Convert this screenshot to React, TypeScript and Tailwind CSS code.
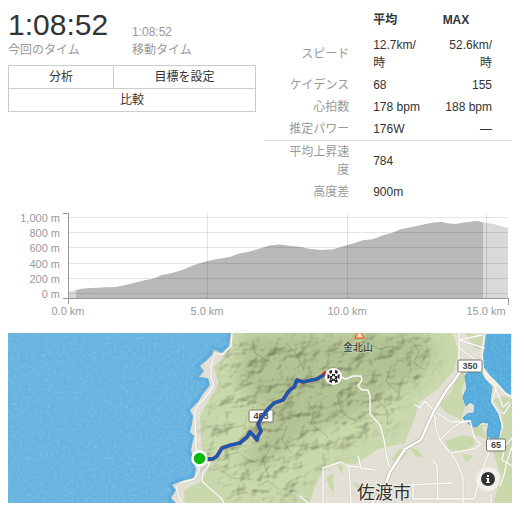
import React from "react";

const sans = "font-['Liberation_Sans','Noto_Sans_CJK_JP',sans-serif]";

type Stat = { label: string; average: string; max?: string };

const effortStats: Stat[] = [
  { label: "スピード", average: "12.7km/時", max: "52.6km/時" },
  { label: "ケイデンス", average: "68", max: "155" },
  { label: "心拍数", average: "178 bpm", max: "188 bpm" },
  { label: "推定パワー", average: "176W", max: "—" },
];

const climbStats: Stat[] = [
  { label: "平均上昇速度", average: "784" },
  { label: "高度差", average: "900m" },
];

function StatRow({ label, average, max }: Stat) {
  return (
    <tr>
      <th scope="row" className="py-0.5 pr-3.5 pl-5 text-right font-normal text-[#999]">
        {label}
      </th>
      <td className="py-0.5 pr-2 pl-2.5">{average}</td>
      <td className="py-0.5 pr-5 pl-2.5 text-right">{max}</td>
    </tr>
  );
}

function Summary() {
  const button = "h-6 cursor-pointer border border-[#ccc] bg-white text-xs leading-4 text-[#333]";
  return (
    <section>
      <dl className="grid grid-cols-2 items-end">
        <div className="flex flex-col-reverse">
          <dt className="text-xs leading-4 text-[#999]">今回のタイム</dt>
          <dd className="text-[30px] leading-[34px] text-[#333]">1:08:52</dd>
        </div>
        <div className="flex flex-col-reverse">
          <dt className="text-xs leading-4 text-[#999]">移動タイム</dt>
          <dd className="text-xs leading-5 text-[#999]">1:08:52</dd>
        </div>
      </dl>
      <div className="mt-[7px] flex">
        <button className={`${button} w-[106px]`}>分析</button>
        <button className={`${button} -ml-px flex-1`}>目標を設定</button>
      </div>
      <button className={`${button} -mt-px block w-full`}>比較</button>
    </section>
  );
}

function Stats() {
  return (
    <table className="w-full table-fixed border-collapse text-xs leading-[18px] text-[#333]">
      <colgroup>
        <col className="w-[40%]" />
        <col className="w-[28%]" />
        <col className="w-[32%]" />
      </colgroup>
      <thead>
        <tr className="h-[26px] text-left font-bold">
          <td />
          <th scope="col" className="pb-0.5 pl-2.5">平均</th>
          <th scope="col" className="pb-0.5 pl-2.5">MAX</th>
        </tr>
      </thead>
      <tbody>
        {effortStats.map((s) => (
          <StatRow key={s.label} {...s} />
        ))}
      </tbody>
      <tbody className="border-t border-[#ddd]">
        {climbStats.map((s) => (
          <StatRow key={s.label} {...s} />
        ))}
      </tbody>
    </table>
  );
}

const profile =
  "M68 298V292L73 291L80 289L92 288L104 287.500L116 287L124 285.500L134 283L144 280.500L154 278.500L162 275L168 274L176 272L184 269.500L192 266L202 262.500L208 261L218 259L230 257L238 254L250 251.500L262 248L270 245.500L280 244.500L290 246L300 247L310 249L320 250L333 249.500L346 245.500L355 243L364 240L372 239.500L384 235L392 233L400 229.500L412 227L424 224.500L434 222.500L442 222L448 223.500L456 224L464 222.500L478 221L483 222.500L492 223.500L500 226L508 228V298Z";

const elevations: [string, number][] = [
  ["1,000 m", 217],
  ["800 m", 232],
  ["600 m", 247],
  ["400 m", 263],
  ["200 m", 278],
  ["0 m", 293],
];

const distances: [string, number][] = [
  ["0.0 km", 68],
  ["5.0 km", 207],
  ["10.0 km", 347],
  ["15.0 km", 486],
];

function ElevationChart() {
  return (
    <svg viewBox="8 208 504 115" role="img" aria-label="標高" className="mt-[5px] block w-full text-[11px]">
      <defs>
        <clipPath id="segment">
          <rect x="76" y="208" width="407" height="90" />
        </clipPath>
      </defs>
      <path d={profile} fill="#d9d9d9" />
      <path d={profile} fill="#b9b9b9" clipPath="url(#segment)" />
      <g stroke="#000" strokeOpacity="0.1" shapeRendering="crispEdges">
        {elevations.map(([label, y]) => (
          <path key={label} d={`M69 ${y + 0.5}H508`} />
        ))}
        {distances.slice(1).map(([label, x]) => (
          <path key={label} d={`M${x + 0.5} 213V298`} />
        ))}
      </g>
      <path d="M63 213.500H68.500V304M63 298.500H508.500V304.500" fill="none" stroke="#999" shapeRendering="crispEdges" />
      <g fill="#999">
        {elevations.map(([label, y]) => (
          <text key={label} x="60" y={y + 5} textAnchor="end">{label}</text>
        ))}
        {distances.map(([label, x]) => (
          <text key={label} x={x} y="315" textAnchor="middle">{label}</text>
        ))}
      </g>
    </svg>
  );
}

const coast =
  "M231 333L229 346L222 353L214 350L212 355L208 359L200 366L204 371L199 377L208 378L210 385L203 394L198 402L190 410L193 416L192 424L190 432L194 436L191 450L194 462L196 470L194 478L182 481L172 485L176 490L171 498L176 503";
const lake =
  "M468 372L481 371L485 379L492 387L490 400L498 412L501 425L498 440H488L487 433L489 423L482 422L476 427L470 425L463 418L467 414L474 413L475 405L470 402L466 406L463 397L467 388L465 376Z";
const bay = "M485 333L482 355L483 368L490 377L498 385L505 393L512 397V333Z";
const hills =
  "M215 333H432L440 348L437 367L422 382L406 392L398 420L385 434L364 440L345 452L326 462L310 480L300 503H235L222 480L205 470L205 420L225 385Z";
const peaks =
  "M245 333H425L435 355L418 378L392 390L372 408L345 420L310 432L292 445L262 468L240 470L258 440L262 410L235 380Z";
const route =
  "M200 459L208 459H213L217 456L222 448L231 445L240 443L247 437L250 432L253 435L257 440L258 436L261 431L258 424L262 417L268 409L274 403L283 400L288 392L291 389L294 387L297 380L303 382L317 379L322 376L325 374";
const highway =
  "M372 503L384 488L390 472L405 449L421 440L428 424L434 411L446 391L456 378L464 366";

const minorRoads = [
  "M232 333L231 346L222 355L215 353L211 366L211 377L214 385L205 398L198 405L195 412L195 425L196 439L196 452L199 462L199 472L194 479L183 482L176 487L179 497L182 503",
  "M199 462L210 463L208 467L203 472L202 481L208 487L220 497L224 503",
  "M338 376L346 379L353 376L361 376L362 380L358 386L362 390L368 390L370 396V414L380 425L384 440L387 459L390 468",
  "M323 503V468L341 462L348 466L359 467M349 466L351 503M358 456L361 468L375 470M300 496L308 503",
  "M415 405L420 408L425 401L434 411L451 422L470 421L474 437L481 444L474 449L451 453L458 465L463 478V503",
  "M434 411L436 429L440 440L450 453M470 421L460 423L452 428L441 439M408 485L452 483M413 484V499L474 499L482 471L488 455L489 438M433 461L437 466L438 499",
  "M512 438L505 446L502 460L512 466M490 377L496 389L492 402L499 413L503 427M496 389L503 407L509 402M502 412L504 414L510 404",
  "M459 333V340L484 348M459 340L482 335M459 339V365M459 348L479 362M491 503V494M512 447L507 461L504 475L500 486",
];

const creeks =
  "M222 363L217 376L223 389M233 402L218 406L207 414M245 425L230 428L216 437M226 456L238 452L248 460L257 463M271 446L263 460L269 478M287 426L282 440L291 453M307 401L314 411L311 424L328 437M252 341L255 353L271 363M285 343L294 350L304 370M365 341L379 349L393 346M391 366L386 381L397 392M378 400L388 412L387 425M337 395L342 413L357 422M411 341L419 351L414 363L425 370M220 470L232 478L245 479M258 486L268 481L279 490";

function Shield({ x, y, w, children }: { x: number; y: number; w: number; children: string }) {
  return (
    <g>
      <rect x={x - w / 2} y={y - 6} width={w} height="12" rx="1.500" fill="#fff" stroke="#777466" />
      <text x={x} y={y + 3} textAnchor="middle" fontSize="9" fontWeight="bold" fill="#444">{children}</text>
    </g>
  );
}

function RouteMap() {
  return (
    <section className="relative mt-2.5" aria-label="ルートマップ">
      <svg viewBox="8 333 504 170" className="block w-full">
        <defs>
          <clipPath id="land">
            <path d={`${coast}H512V333Z`} />
          </clipPath>
          <filter id="relief" x="0" y="0" width="100%" height="100%" colorInterpolationFilters="sRGB">
            <feTurbulence type="fractalNoise" baseFrequency="0.055 0.065" numOctaves="3" seed="12" />
            <feColorMatrix values="0 0 0 0 0  0 0 0 0 0  0 0 0 0 0  1 0 0 0 0" />
            <feDiffuseLighting surfaceScale="3.500" diffuseConstant="1.200" lightingColor="#fffff6">
              <feDistantLight azimuth="225" elevation="56" />
            </feDiffuseLighting>
            <feComposite in2="SourceAlpha" operator="in" />
          </filter>
          <filter id="ripple" x="0" y="0" width="100%" height="100%" colorInterpolationFilters="sRGB">
            <feTurbulence type="fractalNoise" baseFrequency="0.350" numOctaves="2" seed="4" />
            <feColorMatrix values="0 0 0 0 0.650  0 0 0 0 0.860  0 0 0 0 0.970  2.600 0 0 0 -1.150" />
            <feComposite in2="SourceAlpha" operator="in" />
          </filter>
          <filter id="soft" x="-20%" y="-20%" width="140%" height="140%">
            <feGaussianBlur stdDeviation="7" />
          </filter>
          <mask id="mountains" maskUnits="userSpaceOnUse" x="8" y="333" width="504" height="170">
            <path d={hills} fill="#fff" filter="url(#soft)" />
          </mask>
        </defs>

        <rect x="8" y="333" width="504" height="170" fill="#68b3df" />
        <path d={coast} fill="none" stroke="#4a9bd0" strokeOpacity="0.350" strokeWidth="7" />

        <g clipPath="url(#land)">
          <rect x="165" y="333" width="347" height="170" fill="#e2dfd4" />
          <path
            d="M234 333H452L459 352L454 370L438 389L419 402L414 420L405 443L378 449L356 464L333 463L320 474L309 503H185L184 490L200 482L209 468L202 457L201 438L200 415L211 397L219 384L214 367L225 356Z"
            fill="#cad9ad"
          />
          <path
            d="M466 333L484 337L480 350L474 348ZM461 370L466 376L461 392L465 407L461 420L447 413L439 405L451 391ZM489 425L482 427L487 439L475 435L470 425ZM503 396L512 399V503H493L501 476L493 452L503 430L501 410L493 400ZM445 441L462 435L472 437L476 444L462 452L449 449ZM410 447L418 450L424 458L415 456ZM326 478L333 473L334 493L329 487ZM336 463L343 466L342 475ZM353 482L372 489L360 494ZM400 448L391 460L397 463L408 453ZM462 454L473 456L466 462Z"
            fill="#c9d9ab"
          />
          <path d={peaks} fill="#97a878" fillOpacity="0.450" filter="url(#soft)" />
          <g mask="url(#mountains)" className="mix-blend-multiply">
            <rect x="165" y="333" width="300" height="170" filter="url(#relief)" opacity="0.600" />
            <path d={creeks} fill="none" stroke="#899a6b" strokeOpacity="0.450" strokeWidth="0.800" />
          </g>
        </g>

        <path d={lake} fill="#55acdc" stroke="#4b9fcf" />
        <path d={bay} fill="#55acdc" stroke="#f3f0e8" strokeWidth="2" />
        <path d={`${coast}H8V333Z`} fill="#fff" filter="url(#ripple)" opacity="0.250" />
        <path d={`${lake}${bay}`} fill="#fff" filter="url(#ripple)" opacity="0.250" />

        <g fill="none" strokeLinejoin="round" strokeLinecap="round">
          {minorRoads.map((d) => (
            <path key={d} d={d} stroke="#c2beb4" strokeOpacity="0.450" strokeWidth="2.500" />
          ))}
          {minorRoads.map((d) => (
            <path key={d} d={d} stroke="#fbfaf6" strokeWidth="1.400" />
          ))}
          <path d={highway} stroke="#bdb9af" strokeWidth="4" />
          <path d={highway} stroke="#fff" strokeWidth="2.500" />
          <path d="M483 373L486 379L497 387L498 384L488 375Z" fill="#eeebe3" stroke="#faf8f2" />
        </g>

        <path d="M359.500 330L364 338H355Z" fill="#f8dfc0" stroke="#ed7139" strokeWidth="1.500" />
        <text x="358" y="351" textAnchor="middle" fontSize="10" fontWeight="500" fill="#3e4434" stroke="#dfe6cd" strokeWidth="1.500" strokeOpacity="0.600" paintOrder="stroke">金北山</text>
        <text x="384" y="499" textAnchor="middle" fontSize="18" fill="#303030" stroke="#f1eee5" strokeWidth="2" paintOrder="stroke">佐渡市</text>
        <Shield x={261} y={416} w={24}>463</Shield>
        <Shield x={470} y={366} w={24}>350</Shield>
        <Shield x={496} y={445} w={19}>65</Shield>

        <g fill="none" strokeLinejoin="round">
          <path d={route} stroke="#a83c5c" strokeWidth="3.800" />
          <path d={route} stroke="#1459b3" strokeWidth="3.200" />
          <path d="M323 374.500L326 372" stroke="#ef1725" strokeWidth="3" />
        </g>
        <circle cx="199.500" cy="458.500" r="7" fill="#08b80d" stroke="#fff" strokeWidth="2.500" />
        <circle cx="333.500" cy="376.500" r="8.500" fill="#fff" />
        <g fill="#222">
          <path d="M332 374H335V376H337V379H335V381H332V379H330V376H332Z" />
          <path d="M333.500 375.500L335.500 377.500L333.500 379.500L331.500 377.500Z" fill="#fff" />
          <path d="M329 371L332 370V373L330 374ZM335 370L338 371L337 374L335 373ZM327.500 374L329.500 375V378L327.500 379ZM339.500 374V379L337.500 378V375ZM329 382L330 379L332 380V383ZM338 382L335 383V380L337 379Z" />
        </g>
      </svg>
      <button
        aria-label="地図の情報"
        className="absolute right-3 bottom-3 grid size-6 cursor-pointer place-items-center rounded-full bg-white/50"
      >
        <svg viewBox="0 0 14 14" className="size-3.5">
          <circle cx="7" cy="7" r="7" fill="#333" />
          <path d="M6 3H8V5H6ZM5 6H8V10H9V11H5V10H6V7H5Z" fill="#fff" />
        </svg>
      </button>
    </section>
  );
}

export default function App() {
  return (
    <main className={`${sans} bg-white py-2 pr-3 pl-2`}>
      <div className="grid grid-cols-2 items-start gap-2">
        <Summary />
        <Stats />
      </div>
      <ElevationChart />
      <RouteMap />
    </main>
  );
}
